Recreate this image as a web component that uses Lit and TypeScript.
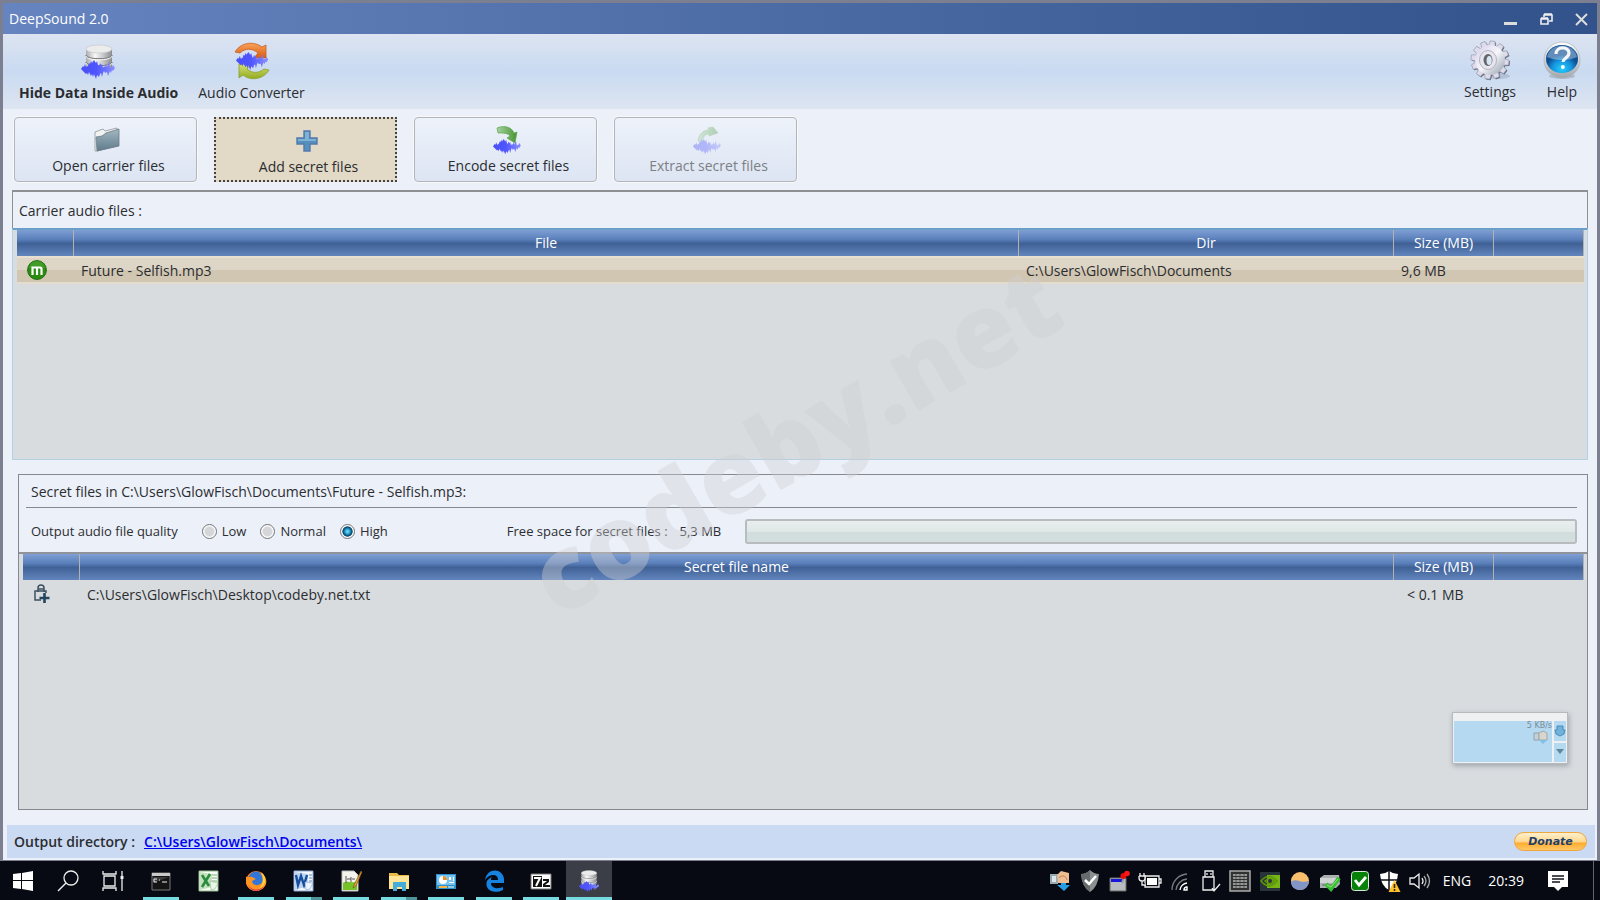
import { LitElement, html, css, svg } from "lit";
import { customElement, state } from "lit/decorators.js";

const wave = svg`<path d="M0 9l2-3 1 1 1-3 1 3 2-1 1-3 1 1 1-3 1 2 2-3 2 3 1-2 1 4 1 1 1-3 1 2 1-1 1 4 1-2 1 1 1-3 1 3 2-5 1 6 2-1 1-2 2 3-2 3-1-1-1 3-1-2-2 5-1-4-2 1-1-2-1 2-1 4-1-4-1 1-1 3-2-2-1 4-2-5-1 3-1-3-1 2-2-4-1 3-1-2-1 1z" fill="url(#waveFill)"/>`;
const waveDefs = svg`<linearGradient id="waveFill"><stop offset="0" stop-color="#4a50f5"/><stop offset=".45" stop-color="#4f55ff"/><stop offset="1" stop-color="#8a90ff"/></linearGradient>`;

const discs = (bottom: number) => svg`
  <path d="M4 5v${bottom}c0 5 26 5 26 0V5z" fill="url(#discFill)"/>
  <path d="M4 11c0 5 26 5 26 0M4 18c0 5 26 5 26 0" fill="none" stroke="#7f8184" stroke-width="1.4"/>
  <path d="M4 12c0 5 26 5 26 0M4 19c0 5 26 5 26 0" fill="none" stroke="#fafafa" stroke-width="1"/>
  <ellipse cx="17" cy="5" rx="13" ry="4" fill="#ececec" stroke="#c8c9cb" stroke-width=".7"/>`;

const hideIcon = html`<svg class="icon36" viewBox="0 0 36 36" aria-hidden="true">
  <defs>${waveDefs}<linearGradient id="discFill"><stop offset="0" stop-color="#a9aaad"/><stop offset=".35" stop-color="#f8f8f8"/><stop offset=".7" stop-color="#c0c1c3"/><stop offset="1" stop-color="#8b8c90"/></linearGradient></defs>
  <g transform="translate(1 1)">${discs(18)}</g><g transform="translate(0 17)">${wave}</g></svg>`;

const convertIcon = html`<svg class="icon36" viewBox="0 0 36 36" aria-hidden="true">
  <defs>${waveDefs}<linearGradient id="org" x2="0" y2="1"><stop offset="0" stop-color="#f9a35c"/><stop offset="1" stop-color="#d9590f"/></linearGradient>
  <linearGradient id="grn" x2="0" y2="1"><stop offset="0" stop-color="#d4df76"/><stop offset="1" stop-color="#94ab1e"/></linearGradient></defs>
  <path d="M1 9C7-1 20-2 28 4l4-2v13H20l4-5C18 5 11 5 6 10z" fill="url(#org)" stroke="#c5601f" stroke-width=".8"/>
  <path d="M35 27c-6 10-19 11-26 5l-4 3V21h12l-4 5c6 5 12 4 17 0z" fill="url(#grn)" stroke="#8c9e2d" stroke-width=".8"/>
  <g transform="translate(2 9) scale(.95)">${wave}</g></svg>`;

const gearTeeth = Array.from({ length: 12 }, (_, i) => svg`<path d="M16.6 7L17.6 1h4.8l1 6z" transform="rotate(${i * 30 + 8} 20 20)"/>`);
const gearIcon = html`<svg class="icon40" viewBox="0 0 40 40" aria-hidden="true">
  <defs><linearGradient id="gear" x2="1" y2="1"><stop offset="0" stop-color="#d5cdec"/><stop offset=".5" stop-color="#f6f6fb"/><stop offset="1" stop-color="#8e9ba8"/></linearGradient></defs>
  <ellipse cx="28" cy="36" rx="12" ry="3" fill="#8190a4" opacity=".35"/>
  <g fill="#667281" transform="translate(1 1)">${gearTeeth}<circle cx="20" cy="20" r="15"/></g>
  <g fill="#dedbea" stroke="#8f8fa4" stroke-width=".6">${gearTeeth}</g>
  <circle cx="20" cy="20" r="15" fill="url(#gear)"/>
  <ellipse cx="18" cy="20" rx="8.500" ry="9.500" fill="#e6e6ec" stroke="#b4b4c2"/>
  <ellipse cx="18" cy="20" rx="4.500" ry="6" fill="#62676f"/><ellipse cx="19.200" cy="20.500" rx="2.600" ry="4.500" fill="#dbe6f5"/></svg>`;

const helpIcon = html`<svg class="icon40" viewBox="0 0 40 40" aria-hidden="true">
  <defs><linearGradient id="rim" x2="0" y2="1"><stop offset="0" stop-color="#fff"/><stop offset="1" stop-color="#a2a7ad"/></linearGradient>
  <radialGradient id="ball" cy=".85"><stop offset="0" stop-color="#22d0ff"/><stop offset=".6" stop-color="#1593dc"/><stop offset="1" stop-color="#0f4f94"/></radialGradient></defs>
  <ellipse cx="20" cy="36" rx="13" ry="3" fill="#75808e" opacity=".35"/>
  <circle cx="20" cy="20" r="18" fill="url(#rim)" stroke="#a9b0b8" stroke-width=".7"/><ellipse cx="20" cy="19" rx="16" ry="14" fill="url(#ball)"/>
  <path d="M5 17C8 2 32 2 35 17c-8 4-22 4-30 0z" fill="#fff" opacity=".35"/>
  <path d="M14 14c0-8 13-8 13-1 0 5-6 5-6 9" fill="none" stroke="#f4f6f8" stroke-width="3.200"/><circle cx="20.800" cy="27" r="2" fill="#fff"/></svg>`;

const folderIcon = html`<svg class="icon28" viewBox="0 0 28 28" aria-hidden="true">
  <defs><linearGradient id="fold" x2="0" y2="1"><stop offset="0" stop-color="#a3b7c2"/><stop offset="1" stop-color="#5f7b8b"/></linearGradient></defs>
  <path d="M2 6l8-3 2 2 12-3v18L4 25H2z" fill="#f2f2f0" stroke="#8e979c" stroke-width=".8"/>
  <path d="M3 11l6-1 4-3 13-4v17L4 25z" fill="url(#fold)" stroke="#6b7c87" stroke-width=".8"/></svg>`;
const plusIcon = html`<svg class="icon28" viewBox="0 0 28 28" aria-hidden="true">
  <path d="M11 4h6v7h7v6h-7v7h-6v-7H4v-6h7z" fill="#5590bd" stroke="#5379ae" stroke-width="1.400"/><path d="M12 5h4v7h7v2H5v-2h7z" fill="#7fb1d5"/></svg>`;
const arrowGreen = svg`<linearGradient id="arw"><stop offset="0" stop-color="#a6d3a0"/><stop offset="1" stop-color="#469432"/></linearGradient>`;
const encodeIcon = html`<svg class="icon28" viewBox="0 0 28 28" aria-hidden="true"><defs>${waveDefs}${arrowGreen}</defs>
  <path d="M4 2C11-1 19 1 21 7l3-1-2 11-8-5 3-2c-2-3-7-3-12-3z" fill="url(#arw)" stroke="#62a552" stroke-width=".7"/><g transform="translate(0 13) scale(.82)">${wave}</g></svg>`;
const extractIcon = html`<svg class="icon28" viewBox="0 0 28 28" aria-hidden="true"><defs>${waveDefs}${arrowGreen}</defs>
  <path d="M5 15C6 7 11 4 16 4l-1-2 5-1 5 6-9 3V8c-4 0-6 3-7 7z" fill="url(#arw)" stroke="#62a552" stroke-width=".7"/><g transform="translate(0 13) scale(.82)">${wave}</g></svg>`;

const mp3Icon = html`<svg class="icon20" viewBox="0 0 20 20" role="img" aria-label="MP3"><circle cx="10" cy="10" r="9.400" fill="#2b8c12" stroke="#1c6b0b"/><path d="M2 8a8 7 0 0 1 16 0" fill="#58ab3d" opacity=".5"/><path d="M5.500 15V7.500h7.500q1.500 0 1.500 1.500v6M10 8v7" fill="none" stroke="#fff" stroke-width="2.200"/></svg>`;
const lockIcon = html`<svg class="icon20" viewBox="0 0 20 20" role="img" aria-label="Locked"><path d="M5 8V4q0-3 3-3t3 3v4M8 16H2V7h11v2M5 5h6" fill="none" stroke="#3c5262" stroke-width="1.500"/><path d="M11.500 9v10M6.500 14h10" stroke="#24455f" stroke-width="2.600"/></svg>`;

type Pic = { name: string; cls?: string; art: unknown };

const system: Pic[] = [
  { name: "Start", art: svg`<path d="M1 4l8-1v7H1zm9-1l11-2v9H10zM1 11h8v8l-8-1zm9 0h11v10l-11-2z" fill="#fff"/>` },
  { name: "Search", art: svg`<circle cx="14" cy="8" r="7" fill="none" stroke="#eee" stroke-width="1.300"/><path d="M9 13l-8 8" stroke="#eee" stroke-width="1.500"/>` },
  { name: "Task View", art: svg`<path d="M1 1v3h13V1M1 21v-3h13v3M2 6h11v10H2zM20 1v20" fill="none" stroke="#eee" stroke-width="1.300"/><path d="M18.500 6h3v3h-3z" fill="#eee"/>` },
];

const apps: Pic[] = [
  { name: "Command Prompt", cls: "open", art: svg`<path d="M2 3h18v17H2z" fill="#141414" stroke="#777"/><path d="M2 3h18v3H2z" fill="#c9c9c9"/><path d="M3 7h16l-16 6z" fill="#3a3a3a"/><path d="M7 9H4v3h3m2-2h1m2 2h5" stroke="#eee" fill="none"/>` },
  { name: "Excel", art: svg`<path d="M1 1h19v20H1z" fill="#fafcf8" stroke="#8db98a"/><path d="M14 5h5M14 8h5M14 11h5" stroke="#79ae77"/><path d="M2 2l12 2v13L2 20z" fill="#c4e2bd"/><path d="M4 5l7 11M12 4L4 17" stroke="#2b8c3f" stroke-width="2.600"/><path d="M12 11l8 2-3 6-4 1z" fill="#e9f5e8" stroke="#88ba88" stroke-width=".6"/>` },
  { name: "Firefox", cls: "open", art: svg`<circle cx="11" cy="11" r="10" fill="#ff7a18"/><circle cx="11" cy="9" r="7.500" fill="#3176d8"/><path d="M1 6c1 3 4 0 6 1l4 2-4 2c1 6 9 5 11 0 0-5-2-7-4-8 7 1 9 9 6 13-5 8-17 6-19-3z" fill="#ff9422"/><path d="M16 2c6 4 6 14-2 17 4-4 5-11 2-17z" fill="#ffd23a"/><path d="M2 12c2 8 11 10 17 4-3 6-14 8-17-4z" fill="#e13c4f"/>` },
  { name: "Word", cls: "open stacked", art: svg`<path d="M1 1h19v20H1z" fill="#f4f8fd" stroke="#8aa9d3"/><path d="M2 2l13 2v12L2 20z" fill="#bcd3ef"/><path d="M3 5l2 10 3-9 3 9 3-10" fill="none" stroke="#174f9f" stroke-width="2.400"/><path d="M16 5h3M16 8h3M16 11h3" stroke="#5b85bf"/><path d="M12 12l8 1-3 6-4 1z" fill="#edf4fd" stroke="#7da0cf" stroke-width=".6"/>` },
  { name: "Notepad++", cls: "open", art: svg`<path d="M2 1h12l4 4v16H2z" fill="#f4f4ec" stroke="#bbb"/><path d="M3 13c5-3 9 1 14-2v9H3z" fill="#75c329"/><path d="M6 6v7M7 9h4M11 7v5M12 9h3" stroke="#555"/><path d="M21 1l-7 14-1 3 3-2 6-14z" fill="#e8a22e" stroke="#714b19" stroke-width=".6"/>` },
  { name: "File Explorer", cls: "open stacked", art: svg`<path d="M1 3h8l2 2h10v14H1z" fill="#eabb45"/><path d="M1 6h20v13H1z" fill="#ffe595"/><path d="M5 12h13v9h-4v-4H9v4H5z" fill="#45acd9"/>` },
  { name: "Control Panel", cls: "open", art: svg`<path d="M1 4h20v15H1z" fill="#2b93d0"/><path d="M2 5h18v10H2z" fill="#76c2ec"/><circle cx="8" cy="10" r="4" fill="#fff"/><path d="M8 10V6a4 4 0 0 1 4 4z" fill="#e8902a"/><path d="M14 7h2v3h-2zm4 0h1v4h-1zm-4 5h5v1h-5z" fill="#fff"/><path d="M4 17h8" stroke="#ffb33e" stroke-width="2"/><path d="M13 17h6" stroke="#fff"/>` },
  { name: "Edge", cls: "open", art: svg`<path d="M2 10C4-3 20-2 21 9v4H8c0 6 8 6 12 4v3C10 25 1 19 4 11c1-2 3-3 5-4-1 1-1 2-1 3h7C15 3 6 4 2 10z" fill="#1683e0"/>` },
  { name: "7-Zip", cls: "open", art: svg`<path d="M1 4h20v15H1z" fill="#fff" stroke="#777"/><path d="M3 6h9v11H3z" fill="#111"/><path d="M4 8h6l-4 8" stroke="#fff" stroke-width="2" fill="none"/><path d="M13 9h6v3l-4 3h5v2h-7v-3l4-3h-4z" fill="#111"/>` },
  { name: "DeepSound", cls: "open active", art: svg`<defs>${waveDefs}<linearGradient id="discFill"><stop offset="0" stop-color="#999"/><stop offset=".35" stop-color="#f8f8f8"/><stop offset="1" stop-color="#888"/></linearGradient></defs><g transform="translate(1 0) scale(.59)">${discs(18)}</g><g transform="translate(1 11) scale(.59)">${wave}</g>` },
];

const tray: Pic[] = [
  { name: "Network activity", art: svg`<path d="M1 4h8v10H1z" fill="#95a9b3"/><path d="M3 6h4v6H3z" fill="#dce5e8"/><path d="M8 5l4-4 8 2v10H9z" fill="#eebd92"/><path d="M10 8c2-3 7-3 8 2" fill="none" stroke="#bb7f55"/><path d="M12 13h5v2h4l-6 6-7-6h4z" fill="#279fe3"/>` },
  { name: "Security", art: svg`<path d="M11 0q4 4 9 4-1 13-9 18Q3 17 2 4q5 0 9-4z" fill="#8d9090"/><path d="M11 0v22Q3 17 2 4q5 0 9-4z" fill="#686b6c"/><path d="M6 10l4 4 7-8" fill="none" stroke="#fff" stroke-width="2.500"/>` },
  { name: "Screen capture", art: svg`<path d="M1 8h16v13H1z" fill="#b8bcc0" stroke="#666"/><path d="M2 9h12v3H2z" fill="#1717db"/><path d="M13 13l2-6" stroke="#999" stroke-width="2"/><circle cx="14.500" cy="6" r="3" fill="#e80c0c"/><circle cx="18" cy="3.500" r="2.800" fill="#ff1717"/>` },
  { name: "Battery", art: svg`<path d="M6 6h14v11H6zM20 9h2v4h-2" fill="none" stroke="#eee" stroke-width="1.300"/><path d="M8 8h10v7H8z" fill="#fff"/><path d="M0 6v2q0 3 3 3t3-3V6H0M1 3v3m4-3v3M3 11v4h4" fill="#080a12" stroke="#eee" stroke-width="1.300"/>` },
  { name: "Wi-Fi", art: svg`<path d="M3 20A16 16 0 0 1 18 4M7 20A12 12 0 0 1 18 9" fill="none" stroke="#777c83" stroke-width="1.300"/><path d="M11 20a8 8 0 0 1 7-7M15 20q0-3 3-3v3z" fill="none" stroke="#fff" stroke-width="1.400"/>` },
  { name: "USB device", art: svg`<path d="M6 7V1h8v6M4 7h11v13H4zM8 3v2m4-2v2M13 18l2 3 6-7" fill="none" stroke="#eee" stroke-width="1.300"/>` },
  { name: "Memory", art: svg`<path d="M1 1h20v20H1z" fill="#303231" stroke="#aaa" stroke-width="1.500"/><path d="M4 5h14M4 8h14M4 11h14M4 14h14M4 17h14" stroke="#b8b8b8" stroke-width="1.500"/><path d="M7 3v16m4-16v16m4-16v16" stroke="#303231" stroke-width=".6"/>` },
  { name: "NVIDIA", art: svg`<path d="M1 2h20v19H1z" fill="#29333a"/><path d="M8 5h13v13H8z" fill="#77b516"/><path d="M2 11c5-6 11-6 16 0-6 7-11 6-16 0zM6 11c3-3 6-3 9 0-3 4-6 3-9 0z" fill="none" stroke="#5d960a" stroke-width="1.600"/><circle cx="11" cy="11" r="2" fill="#29333a"/>` },
  { name: "Weather", art: svg`<circle cx="11" cy="11" r="9" fill="#f6be6d"/><path d="M2 12c5-5 9 2 18-1-1 8-6 9-9 9-5 0-9-3-9-8z" fill="#8295c4"/>` },
  { name: "Storage", art: svg`<path d="M1 8l4-3h15l1 9-4 4H1z" fill="#aaafaf"/><path d="M1 8h16v5H1z" fill="#d0d3d3"/><path d="M3 15h11" stroke="#666"/><path d="M7 14l5 5 8-11" fill="none" stroke="#37bd32" stroke-width="4"/><path d="M8 15l4 2 7-8" fill="none" stroke="#8fe57c" stroke-width="1"/>` },
  { name: "Check", art: svg`<rect x="2.500" y="1.500" width="17" height="19" rx="3" fill="#078107" stroke="#d9ead9"/><path d="M6 10l4 5 7-8" fill="none" stroke="#fff" stroke-width="2.800"/>` },
  { name: "Defender", art: svg`<path d="M10 1q4 3 9 3-1 12-9 16Q2 16 1 4q5 0 9-3z" fill="#fff"/><path d="M10 1v20M1 10h18" stroke="#0a0c14" stroke-width="1.500"/><path d="M15.500 10l6 12H9.500z" fill="#ffc12e"/><path d="M15.500 14v4m0 1v2" stroke="#3b2a00" stroke-width="1.600"/>` },
  { name: "Volume", art: svg`<path d="M1 8h4l5-4v14l-5-4H1zM13 8q2 3 0 6" fill="none" stroke="#eee" stroke-width="1.300"/><path d="M15 6q4 5 0 10M18 4q5 7 0 14" fill="none" stroke="#aaa" stroke-width="1.300"/>` },
];

@customElement("app-root")
export class AppRoot extends LitElement {
  @state() private quality = "High";

  static styles = css`
    :host { display: block; font: 14px/20px "Open Sans", "Noto Sans", sans-serif; color: #2b2d30; }
    * { box-sizing: border-box; }
    button { font: inherit; color: inherit; background: none; border: 0; padding: 0; margin: 0; }
    svg { display: block; flex: none; overflow: visible; }
    .screen { position: relative; display: flex; flex-direction: column; height: 100vh; min-height: 640px; overflow: hidden; }
    .window { flex: 1; min-height: 0; display: flex; flex-direction: column; border: 3px solid #7b7f90; border-bottom-width: 1px; background: #ebf0f9; }
    .titlebar { height: 31px; flex: none; display: flex; align-items: center; justify-content: space-between; padding: 1px 8px 0 6px; color: #fff; background: linear-gradient(90deg, #6684bf, #31528b); }
    .titlebar h1 { font: inherit; margin: 0; }
    .winbtns { display: flex; gap: 20px; }
    .toolbar { height: 75px; flex: none; display: flex; justify-content: space-between; padding: 6px 15px 0 16px; background: linear-gradient(#dde4f1, #c9daf1 50%, #dde5f1); }
    .group { display: flex; gap: 20px; align-items: flex-start; }
    .group.end { gap: 26px; }
    .tool { display: flex; flex-direction: column; align-items: center; }
    .tool.current { font-weight: 700; }
    .icon40 { width: 40px; height: 40px; }
    .icon36 { width: 36px; height: 36px; margin: 3px 0 4px; }
    .end .icon40 { margin-bottom: 2px; }
    .icon28 { width: 28px; height: 28px; margin-right: 4px; }
    .icon20 { width: 20px; height: 20px; }
    .icon22 { width: 22px; height: 22px; }
    .actions { flex: none; display: flex; gap: 17px; padding: 8px 11px; }
    .action { width: 183px; height: 65px; display: flex; flex-direction: column; align-items: center; justify-content: center; gap: 2px; padding: 2px 0 0 6px; border: 1px solid #b3b5b9; border-radius: 4px; background: linear-gradient(#edf2fa, #dde5f3); box-shadow: 0 0 0 1px #f8f9fb; }
    .action.focus { border: 2px dotted #444; border-radius: 0; background: #e2d9c6; box-shadow: none; padding-top: 4px; }
    .action:disabled { color: #7c7f84; }
    .action:disabled svg { opacity: .35; }
    .carrier { flex: 271 1 0; min-height: 0; display: flex; flex-direction: column; margin: 0 9px; }
    .caption { flex: none; height: 38px; padding: 9px 6px 0; margin: 0; font: inherit; border: 1px solid #8d8f93; border-top-width: 2px; border-bottom: 0; }
    .list { flex: 1; min-height: 0; background: #d8dcdf; }
    .carrier .list { border: 1px solid #b3cfe2; border-top: 2px solid #6aa0c8; padding: 0 3px 0 4px; }
    .secret { flex: 335 1 0; min-height: 0; display: flex; flex-direction: column; margin: 14px 9px 15px 15px; border: 1px solid #85888f; }
    .secret h2 { flex: none; font: inherit; margin: 0 10px 0 7px; padding: 7px 5px 5px; border-bottom: 1px solid #85888f; }
    .options { flex: none; display: flex; align-items: center; height: 44px; padding: 2px 10px 0 12px; }
    .quality { display: flex; align-items: center; gap: 14px; margin: 0; padding: 0; border: 0; min-width: 0; }
    .lbl { font-size: 13px; white-space: nowrap; }
    .quality .lbl { margin-right: 10px; }
    .radio { display: flex; align-items: center; gap: 5px; font-size: 13px; }
    .radio input { appearance: none; width: 15px; height: 15px; margin: 0; border: 1px solid #6f7276; border-radius: 50%; background: radial-gradient(circle, #d5d6d9 45%, #fff 65%); }
    .radio input:checked { background: radial-gradient(circle at 50% 50%, #5fd2f3 0 10%, #0b6c9e 40%, #0a3f63 52%, #fff 60%); }
    .free { flex: 1; display: flex; align-items: center; gap: 12px; margin-left: 119px; }
    progress { appearance: none; flex: 1; height: 25px; margin-left: 12px; border: 2px solid #b9bcbe; border-radius: 3px; background: linear-gradient(#e9eeee, #dfe7e7 50%, #d1dddd 55%, #d3dfdf); }
    progress::-webkit-progress-bar { background: transparent; }
    progress::-webkit-progress-value { background: #8fc7a1; }
    .secret .list { border-top: 2px solid #909399; padding: 0 3px 0 4px; }
    table { width: 100%; border-collapse: separate; border-spacing: 0; table-layout: fixed; }
    th { height: 26px; padding: 0; font-weight: 400; color: #fff; border-right: 1px solid #b4b2ae; background: linear-gradient(#7e9fd4, #5b80bb 35%, #3f6196 52%, #6285bd); }
    td { height: 28px; padding: 2px 8px 0 7px; white-space: nowrap; overflow: hidden; }
    td.pic { padding: 0 0 0 10px; }
    td.num { padding-left: 13px; }
    .selected td { background: linear-gradient(#e6dfd2 0 2px, #ddd5c5 2px 50%, #d1c6b2 50% 26px, #e4dccd 26px); }
    .c-pic { width: 57px; } .c-dir { width: 375px; } .c-size { width: 100px; } .c-end { width: 90px; }
    .footer { flex: none; height: 33px; margin: 0 2px 2px 4px; padding: 0 8px 0 7px; display: flex; align-items: center; gap: 9px; font-weight: 600; background: #cadaf2; }
    .footer a { color: #0000f0; }
    .donate { margin-left: auto; width: 73px; height: 19px; border: 1px solid #f2a73c; border-radius: 10px; background: linear-gradient(#fff0cc, #ffd890 50%, #ffad30 60%, #ffc766); font: italic 700 11px/17px "DejaVu Sans", sans-serif; color: #213f6b; }
    .taskbar { flex: none; height: 39px; display: flex; justify-content: space-between; color: #fff; background: #070a13; }
    .system, .apps, .tray { display: flex; }
    .system button { width: 45px; }
    .apps { width: 474px; margin: 0 auto 0 3px; justify-content: space-between; }
    .apps button { width: 46px; }
    .system button, .apps button { display: flex; align-items: center; justify-content: center; }
    .apps .open { background: linear-gradient(#76dbe0, #76dbe0) 50% 100% / 36px 3px no-repeat; }
    .apps .stacked { background: linear-gradient(90deg, #76dbe0 25px, #4e9499 25px) 50% 100% / 36px 3px no-repeat; }
    .apps .active { background: linear-gradient(#76dbe0, #76dbe0) 50% 100% / 100% 3px no-repeat, #3b3e47; }
    .tray { align-items: center; gap: 8px; border-right: 1px solid #62656c; margin-right: 6px; padding-right: 24px; }
    .tray .text { margin-left: 4px; }
    .tray .time { margin: 0 15px 0 9px; }
    .watermark { position: absolute; left: 50%; top: 49%; margin: -4px 0 0 -7px; font: 800 103px/100px "Open Sans", sans-serif; color: #d0d0d2; opacity: .4; transform: translate(-50%, -50%) rotate(-30deg); pointer-events: none; white-space: nowrap; }
    .meter { position: absolute; right: 32px; bottom: 136px; width: 116px; height: 52px; padding: 8px 1px 1px; display: flex; gap: 2px; background: #eef0f2; border: 1px solid #b5babf; box-shadow: 1px 2px 5px rgba(70, 80, 90, .4); }
    .graph { flex: 1; background: #b5d9f0; display: flex; flex-direction: column; align-items: flex-end; font: 8px/10px "DejaVu Sans", sans-serif; color: #7a8c98; }
    .graph svg { margin-right: 4px; }
    .side { display: flex; flex-direction: column; gap: 2px; }
    .side button { flex: 1; width: 12px; background: #b5d9f0; display: flex; align-items: center; justify-content: center; }
  `;

  private picButton(p: Pic) {
    return html`<button class=${p.cls ?? ""} aria-label=${p.name}><svg class="icon22" viewBox="0 0 22 22">${p.art}</svg></button>`;
  }

  render() {
    return html`<div class="screen">
      <main class="window">
        <header class="titlebar"><h1>DeepSound 2.0</h1>
          <div class="winbtns">
            <button aria-label="Minimize"><svg width="15" height="15"><path d="M0 11.500h13" stroke="#ddd" stroke-width="3"/></svg></button>
            <button aria-label="Restore"><svg width="15" height="15"><path d="M5 5V3h8v6h-3M2 7h7v5H2zM2 6h7M5 2h8" fill="none" stroke="#eee" stroke-width="1.600"/></svg></button>
            <button aria-label="Close"><svg width="15" height="15"><path d="M2 2l11 11M13 2L2 13" stroke="#ddd" stroke-width="2"/></svg></button>
          </div></header>
        <nav class="toolbar">
          <div class="group"><button class="tool current">${hideIcon}Hide Data Inside Audio</button><button class="tool">${convertIcon}Audio Converter</button></div>
          <div class="group end"><button class="tool">${gearIcon}Settings</button><button class="tool">${helpIcon}Help</button></div>
        </nav>
        <div class="actions">
          <button class="action">${folderIcon}Open carrier files</button>
          <button class="action focus">${plusIcon}Add secret files</button>
          <button class="action">${encodeIcon}Encode secret files</button>
          <button class="action" disabled>${extractIcon}Extract secret files</button>
        </div>
        <section class="carrier">
          <h2 class="caption">Carrier audio files :</h2>
          <div class="list"><table>
            <colgroup><col class="c-pic"><col><col class="c-dir"><col class="c-size"><col class="c-end"></colgroup>
            <thead><tr><th></th><th>File</th><th>Dir</th><th>Size (MB)</th><th></th></tr></thead>
            <tbody><tr class="selected"><td class="pic">${mp3Icon}</td><td>Future - Selfish.mp3</td><td>C:\\Users\\GlowFisch\\Documents</td><td>9,6 MB</td><td></td></tr></tbody>
          </table></div>
        </section>
        <section class="secret">
          <h2>Secret files in C:\\Users\\GlowFisch\\Documents\\Future - Selfish.mp3:</h2>
          <div class="options">
            <div class="quality" role="radiogroup" aria-labelledby="q"><span class="lbl" id="q">Output audio file quality</span>
              ${["Low", "Normal", "High"].map((v) => html`<label class="radio"><input type="radio" name="quality" .checked=${this.quality === v} @change=${() => (this.quality = v)}>${v}</label>`)}
            </div>
            <div class="free"><label class="lbl" for="space">Free space for secret files :</label><span class="lbl">5,3 MB</span><progress id="space" value="0" max="100"></progress></div>
          </div>
          <div class="list"><table>
            <colgroup><col class="c-pic"><col><col class="c-size"><col class="c-end"></colgroup>
            <thead><tr><th></th><th>Secret file name</th><th>Size (MB)</th><th></th></tr></thead>
            <tbody><tr><td class="pic">${lockIcon}</td><td>C:\\Users\\GlowFisch\\Desktop\\codeby.net.txt</td><td class="num">&lt; 0.1 MB</td><td></td></tr></tbody>
          </table></div>
        </section>
        <footer class="footer"><span>Output directory :</span><a href="#">C:\\Users\\GlowFisch\\Documents\\</a><button class="donate">Donate</button></footer>
      </main>
      <div class="taskbar">
        <div class="system">${system.map((a) => this.picButton(a))}</div>
        <div class="apps">${apps.map((a) => this.picButton(a))}</div>
        <div class="tray">${tray.map((t) => this.picButton(t))}<span class="text">ENG</span><span class="time">20:39</span>
          <button aria-label="Notifications"><svg class="icon22" viewBox="0 0 22 22"><path d="M1 1h20v16h-6l-4 4-4-4H1z" fill="#fff"/><path d="M5 6h12M5 9h12M5 12h8" stroke="#10131b" stroke-width="1.300"/></svg></button></div>
      </div>
      <aside class="meter"><div class="graph">5 KB/s<svg width="14" height="13" viewBox="0 0 14 13"><path d="M0 2h5v7H0z" fill="#c4d0d6" stroke="#8fa3ae"/><path d="M5 2l4-2 4 2v7H5z" fill="#d9d6cd" stroke="#a3a8a8"/><path d="M5 9h8l-4 4z" fill="#7fc0e8"/></svg></div>
        <div class="side"><button aria-label="Download"><svg width="10" height="10"><path d="M2 0h6v4h2L9 8 5 10 1 8 0 4h2z" fill="#71b1da" stroke="#498dbb"/></svg></button><button aria-label="More"><svg width="10" height="6"><path d="M1 0h8L5 5z" fill="#61869e"/></svg></button></div></aside>
      <div class="watermark">codeby.net</div>
    </div>`;
  }
}
